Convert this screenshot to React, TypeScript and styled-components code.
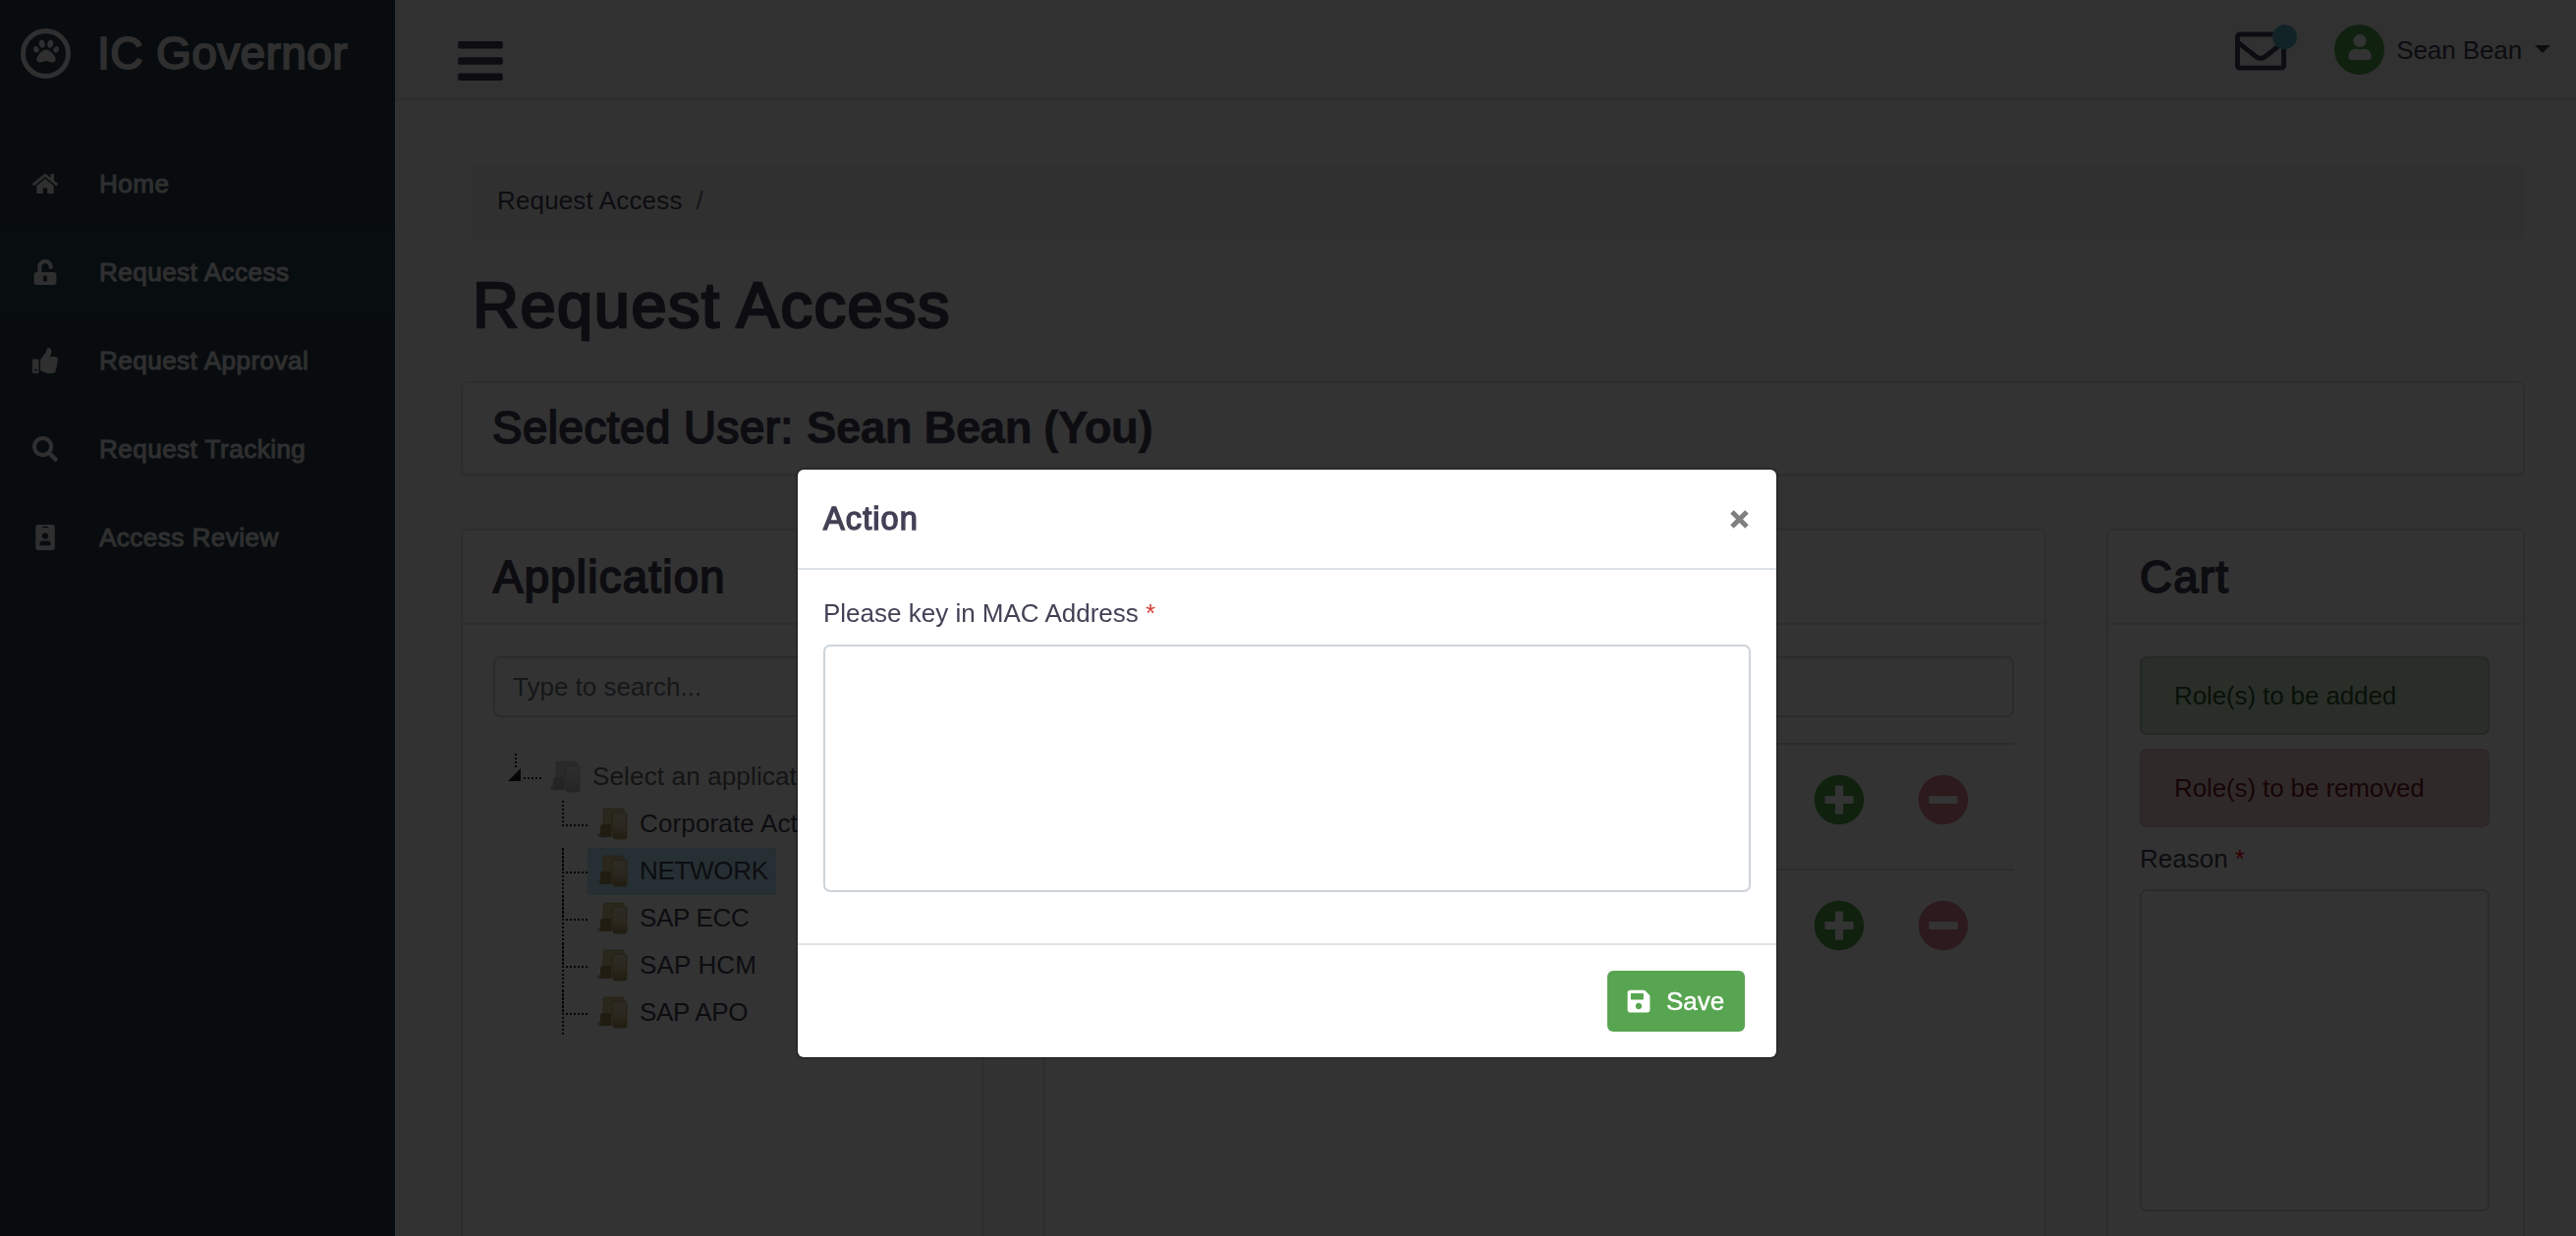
import { useState } from "react";
import styled, { createGlobalStyle } from "styled-components";
import {
  FaBars,
  FaHome,
  FaIdBadge,
  FaMinusCircle,
  FaPaw,
  FaPlusCircle,
  FaRegEnvelope,
  FaSave,
  FaSearch,
  FaThumbsUp,
  FaUnlockAlt,
  FaUser,
} from "react-icons/fa";

const GlobalStyle = createGlobalStyle`
  *{
    box-sizing:border-box;
  }
  body{
    margin:0;
    overflow:hidden;
    background-color:#fafafa;
    color:#434155;
    font-family:"Helvetica Neue", "Liberation Sans", Arial, sans-serif;
    font-size:26px;
    line-height:39px;
  }
  h1,h3,h5,ul,p{
    margin:0;
    padding:0;
    font-weight:400;
  }
  ul{
    list-style:none;
  }
  svg{
    display:block;
    flex-shrink:0;
  }
`;

const Page = styled.div`
  display:flex;
  height:1258px;
  overflow:hidden;
`;

const Sidebar = styled.aside`
  width:402px;
  flex-shrink:0;
  background-color:#283c4a;
  color:#eaeaea;
`;

const Brand = styled.div`
  display:flex;
  align-items:center;
  height:108px;
  padding-left:21px;
  margin-bottom:34px;
`;

const Logo = styled.div`
  display:flex;
  justify-content:center;
  align-items:center;
  width:51px;
  height:51px;
  margin-right:27px;
  padding-bottom:5px;
  border:5px solid #eaeaea;
  border-radius:50%;
`;

const BrandName = styled.span`
  font-size:46px;
  line-height:54px;
  letter-spacing:0.4px;
  -webkit-text-stroke:1.8px currentColor;
`;

const NavItem = styled.li<{ $active?: boolean }>`
  display:flex;
  align-items:center;
  height:90px;
  background-color:${(props) => (props.$active ? "#2c4251" : "transparent")};
  letter-spacing:0.5px;
  -webkit-text-stroke:1px currentColor;
`;

const NavIcon = styled.span`
  display:flex;
  justify-content:center;
  width:92px;
  margin-right:9px;
  svg{
    stroke-width:0;
  }
`;

const Main = styled.div`
  flex:1;
  display:flex;
  flex-direction:column;
`;

const TopBar = styled.header`
  display:flex;
  justify-content:space-between;
  height:102px;
  flex-shrink:0;
  padding:0 26px 0 61px;
  background-color:#f3f3f3;
  border-bottom:2px solid #dedede;
`;

const MenuButton = styled.div`
  padding-top:36px;
`;

const TopRight = styled.div`
  display:flex;
  align-items:flex-start;
  padding-top:25px;
`;

const Mail = styled.div`
  position:relative;
  padding-top:1px;
  margin-right:49px;
`;

const MailBadge = styled.span`
  position:absolute;
  top:0;
  left:38px;
  width:25px;
  height:25px;
  border-radius:50%;
  background-color:#5bb0c8;
`;

const Avatar = styled.div`
  display:flex;
  justify-content:center;
  width:51px;
  height:51px;
  padding-top:10px;
  margin-right:12px;
  border-radius:50%;
  background-color:#58a551;
  color:#ffffff;
`;

const UserName = styled.span`
  padding-top:7px;
  letter-spacing:-0.1px;
`;

const Caret = styled.span`
  margin:21px 0 0 13px;
  border-top:8px solid currentColor;
  border-left:8px solid transparent;
  border-right:8px solid transparent;
`;

const Content = styled.main`
  flex:1;
  display:flex;
  flex-direction:column;
  padding:65px 52px 0 67px;
`;

const Breadcrumb = styled.div`
  display:flex;
  gap:14px;
  height:77px;
  padding:18px 26px;
  margin:0 0 28px 11px;
  border-radius:7px;
  background-color:#f0f0f0;
  letter-spacing:0.15px;
  span{
    color:#6c757d;
  }
`;

const PageTitle = styled.h1`
  margin:0 0 38px 12px;
  font-size:65px;
  line-height:78px;
  letter-spacing:1.5px;
  -webkit-text-stroke:2.6px currentColor;
`;

const Card = styled.section`
  display:flex;
  flex-direction:column;
  background-color:#ffffff;
  border:2px solid #e2e2e2;
  border-radius:7px;
`;

const SelectedCard = styled(Card)`
  height:96px;
  padding:19px 30px 0 30px;
  margin-bottom:54px;
  box-shadow:0 1px 1px rgba(0,0,0,0.12);
`;

const CardTitle = styled.h3`
  font-size:45.5px;
  line-height:54.6px;
  letter-spacing:1.3px;
  -webkit-text-stroke:1.9px currentColor;
`;

const SelectedTitle = styled(CardTitle)`
  letter-spacing:0.6px;
  b{
    font-weight:700;
    letter-spacing:-0.4px;
    -webkit-text-stroke:0.6px currentColor;
  }
`;

const Columns = styled.div`
  display:grid;
  grid-template-columns:532px 1021px 426px;
  gap:61px;
  height:780px;
`;

const CardHeader = styled.div`
  height:96px;
  flex-shrink:0;
  padding:21px 31px 0 31px;
  border-bottom:2px solid #e0e0e0;
`;

const CardBody = styled.div`
  padding:32px 31px;
`;

const CartHeader = styled(CardHeader)`
  padding-left:32px;
`;

const CartBody = styled(CardBody)`
  padding:32px 34px 32px 32px;
`;

const SearchInput = styled.input`
  display:block;
  width:100%;
  height:62px;
  padding:0 20px 0 18px;
  border:2px solid #d4d6d9;
  border-radius:7px;
  background-color:#ffffff;
  font:inherit;
  &::placeholder{
    color:#6c757d;
    opacity:1;
  }
`;

const Tree = styled.ul`
  padding-top:37px;
`;

const TreeRow = styled.li<{ $child?: boolean }>`
  display:flex;
  height:48px;
  padding-left:${(props) => (props.$child ? "63px" : "15px")};
  white-space:nowrap;
`;

const Lines = styled.svg`
  width:33px;
  height:48px;
  overflow:visible;
`;

const Node = styled.div<{ $selected?: boolean; $muted?: boolean; $tight?: boolean }>`
  display:flex;
  align-items:center;
  gap:11px;
  height:48px;
  padding:0 8px 2px 10px;
  border-radius:4px;
  background-color:${(props) => (props.$selected ? "#beebff" : "transparent")};
  box-shadow:${(props) => (props.$selected ? "inset 0 0 1px #999999" : "none")};
  color:${(props) => (props.$muted ? "#666666" : "inherit")};
  letter-spacing:${(props) => (props.$tight ? "-0.3px" : "0.15px")};
  svg{
    position:relative;
    top:1px;
  }
`;

const RoleList = styled.ul`
  margin-top:26px;
`;

const RoleRow = styled.li`
  display:flex;
  justify-content:flex-end;
  gap:54px;
  height:128px;
  padding:30px 46px 0 0;
  border-top:2px solid #d9d9d9;
`;

const AddIcon = styled(FaPlusCircle)`
  color:#4fa548;
`;

const RemoveIcon = styled(FaMinusCircle)`
  color:#dd848b;
`;

const CartBox = styled.div<{ $danger?: boolean }>`
  height:80px;
  padding:19px 33px;
  margin-bottom:14px;
  border:2px solid ${(props) => (props.$danger ? "#dcbfc1" : "#b4c8b6")};
  border-radius:7px;
  background-color:${(props) => (props.$danger ? "#efcdcd" : "#cfe6cb")};
  color:${(props) => (props.$danger ? "#721c24" : "#2d562a")};
  letter-spacing:-0.12px;
`;

const Label = styled.label`
  display:block;
  margin-bottom:12px;
`;

const CartLabel = styled(Label)`
  margin:-1px 0 11px 0;
`;

const Star = styled.span<{ $color: string }>`
  color:${(props) => props.$color};
`;

const TextArea = styled.textarea<{ $height: number }>`
  display:block;
  width:100%;
  height:${(props) => props.$height}px;
  border:2px solid #ced4da;
  border-radius:7px;
  background-color:#ffffff;
  font:inherit;
  resize:none;
`;

const Overlay = styled.div`
  position:fixed;
  inset:0;
  display:flex;
  justify-content:center;
  align-items:flex-start;
  padding:476px 2px 0 0;
  background-color:rgba(0,0,0,0.8);
`;

const Modal = styled.div`
  width:1000px;
  height:602px;
  border:2px solid rgba(0,0,0,0.2);
  border-radius:8px;
  background-color:#ffffff;
  background-clip:padding-box;
`;

const ModalHeader = styled.div`
  display:flex;
  justify-content:space-between;
  align-items:center;
  height:102px;
  padding:0 28px 0 26px;
  border-bottom:2px solid #dee2e6;
`;

const ModalTitle = styled.h5`
  font-size:32.5px;
  letter-spacing:1.1px;
  -webkit-text-stroke:1.4px currentColor;
`;

const ModalBody = styled.div`
  height:380px;
  padding:25px 26px 0 26px;
`;

const ModalFooter = styled.div`
  display:flex;
  justify-content:flex-end;
  height:116px;
  padding:26px 32px;
  border-top:2px solid #dee2e6;
`;

const SaveButton = styled.button`
  display:flex;
  align-items:center;
  gap:15px;
  width:140px;
  height:62px;
  padding:0 0 0 19px;
  border:0;
  border-radius:6px;
  background-color:#58a551;
  color:#ffffff;
  font:inherit;
  -webkit-text-stroke:0.4px currentColor;
  svg{
    stroke-width:0;
  }
`;

const navItems = [
  { label: "Home", icon: FaHome },
  { label: "Request Access", icon: FaUnlockAlt, active: true },
  { label: "Request Approval", icon: FaThumbsUp },
  { label: "Request Tracking", icon: FaSearch },
  { label: "Access Review", icon: FaIdBadge },
];

const applications = [
  { name: "Corporate Active Directory" },
  { name: "NETWORK", tight: true },
  { name: "SAP ECC", tight: true },
  { name: "SAP HCM" },
  { name: "SAP APO", tight: true },
];

function FolderIcon({ muted }: { muted?: boolean }) {
  const light = muted ? "#e2e2e2" : "#e0d5b2";
  const mid = muted ? "#cfcfcf" : "#cfc093";
  const dark = muted ? "#b4b4b4" : "#a08c55";
  const edge = muted ? "#b8b8b8" : "#b3a069";
  const id = muted ? "folder-muted" : "folder";
  return (
    <svg width="32" height="34" viewBox="0 0 32 34">
      <defs>
        <linearGradient id={id} x1="0" y1="0" x2="0" y2="1">
          <stop offset="0" stopColor={light} />
          <stop offset="0.6" stopColor={mid} />
          <stop offset="1" stopColor={dark} />
        </linearGradient>
      </defs>
      <ellipse cx="5" cy="28" rx="5" ry="2.5" fill="#b8b8b8" />
      <path d="M8 1 H25 Q27 1 27 3 V29 H5 V18 L6 16 V3 Q6 1 8 1 Z" fill={mid} stroke={edge} strokeWidth="0.8" />
      <path d="M6 17 H14 V30 H5 Q3 30 3 28 V20 Q3 17 6 17 Z" fill={dark} />
      <path
        d="M17 5 H28 Q30 5 30 7 V30 Q30 32 28 32 H18 Q16 32 16 30 V22 L15 20 V7 Q15 5 17 5 Z"
        fill={`url(#${id})`}
        stroke={edge}
      />
    </svg>
  );
}

function RootLines() {
  return (
    <Lines stroke="#222222" strokeWidth="2" strokeDasharray="2 2">
      <path d="M8 0 V16" />
      <path d="M16 25 H34" />
      <path d="M0 28 L13 15 V28 Z" fill="#222222" stroke="none" />
    </Lines>
  );
}

function ChildLines({ first }: { first: boolean }) {
  return (
    <Lines stroke="#222222" strokeWidth="2" strokeDasharray="2 2">
      <path d={first ? "M8 0 V24" : "M8 0 V48"} />
      {!first && <path d="M8 0 V24" strokeDasharray="3 1" />}
      <path d="M7 25 H33" />
    </Lines>
  );
}

function App() {
  const [selected, setSelected] = useState("NETWORK");
  return (
    <>
      <GlobalStyle />
      <Page>
        <Sidebar>
          <Brand>
            <Logo>
              <FaPaw size={26} />
            </Logo>
            <BrandName>IC Governor</BrandName>
          </Brand>
          <ul>
            {navItems.map(({ label, icon: Icon, active }) => (
              <NavItem key={label} $active={active}>
                <NavIcon>
                  <Icon size={26} />
                </NavIcon>
                {label}
              </NavItem>
            ))}
          </ul>
        </Sidebar>
        <Main>
          <TopBar>
            <MenuButton>
              <FaBars size={52} />
            </MenuButton>
            <TopRight>
              <Mail>
                <FaRegEnvelope size={52} />
                <MailBadge />
              </Mail>
              <Avatar>
                <FaUser size={26} />
              </Avatar>
              <UserName>Sean Bean</UserName>
              <Caret />
            </TopRight>
          </TopBar>
          <Content>
            <Breadcrumb>
              Request Access <span>/</span>
            </Breadcrumb>
            <PageTitle>Request Access</PageTitle>
            <SelectedCard>
              <SelectedTitle>
                Selected User: <b>Sean Bean (You)</b>
              </SelectedTitle>
            </SelectedCard>
            <Columns>
              <Card>
                <CardHeader>
                  <CardTitle>Application</CardTitle>
                </CardHeader>
                <CardBody>
                  <SearchInput placeholder="Type to search..." />
                  <Tree>
                    <TreeRow>
                      <RootLines />
                      <Node $muted>
                        <FolderIcon muted />
                        Select an application
                      </Node>
                    </TreeRow>
                    {applications.map(({ name, tight }, i) => (
                      <TreeRow key={name} $child onClick={() => setSelected(name)}>
                        <ChildLines first={i === 0} />
                        <Node $selected={name === selected} $tight={tight}>
                          <FolderIcon />
                          {name}
                        </Node>
                      </TreeRow>
                    ))}
                  </Tree>
                </CardBody>
              </Card>
              <Card>
                <CardHeader />
                <CardBody>
                  <SearchInput />
                  <RoleList>
                    {[1, 2].map((id) => (
                      <RoleRow key={id}>
                        <AddIcon size={52} />
                        <RemoveIcon size={52} />
                      </RoleRow>
                    ))}
                  </RoleList>
                </CardBody>
              </Card>
              <Card>
                <CartHeader>
                  <CardTitle>Cart</CardTitle>
                </CartHeader>
                <CartBody>
                  <CartBox>Role(s) to be added</CartBox>
                  <CartBox $danger>Role(s) to be removed</CartBox>
                  <CartLabel>
                    Reason <Star $color="#ff0000">*</Star>
                  </CartLabel>
                  <TextArea $height={328} />
                </CartBody>
              </Card>
            </Columns>
          </Content>
        </Main>
      </Page>
      <Overlay>
        <Modal>
          <ModalHeader>
            <ModalTitle>Action</ModalTitle>
            <svg width="19" height="19" viewBox="0 0 19 19" stroke="#808080" strokeWidth="5">
              <path d="M2 2 L17 17 M17 2 L2 17" />
            </svg>
          </ModalHeader>
          <ModalBody>
            <Label>
              Please key in MAC Address <Star $color="#d43f3a">*</Star>
            </Label>
            <TextArea $height={252} />
          </ModalBody>
          <ModalFooter>
            <SaveButton>
              <FaSave size={26} />
              Save
            </SaveButton>
          </ModalFooter>
        </Modal>
      </Overlay>
    </>
  );
}

export default App;
